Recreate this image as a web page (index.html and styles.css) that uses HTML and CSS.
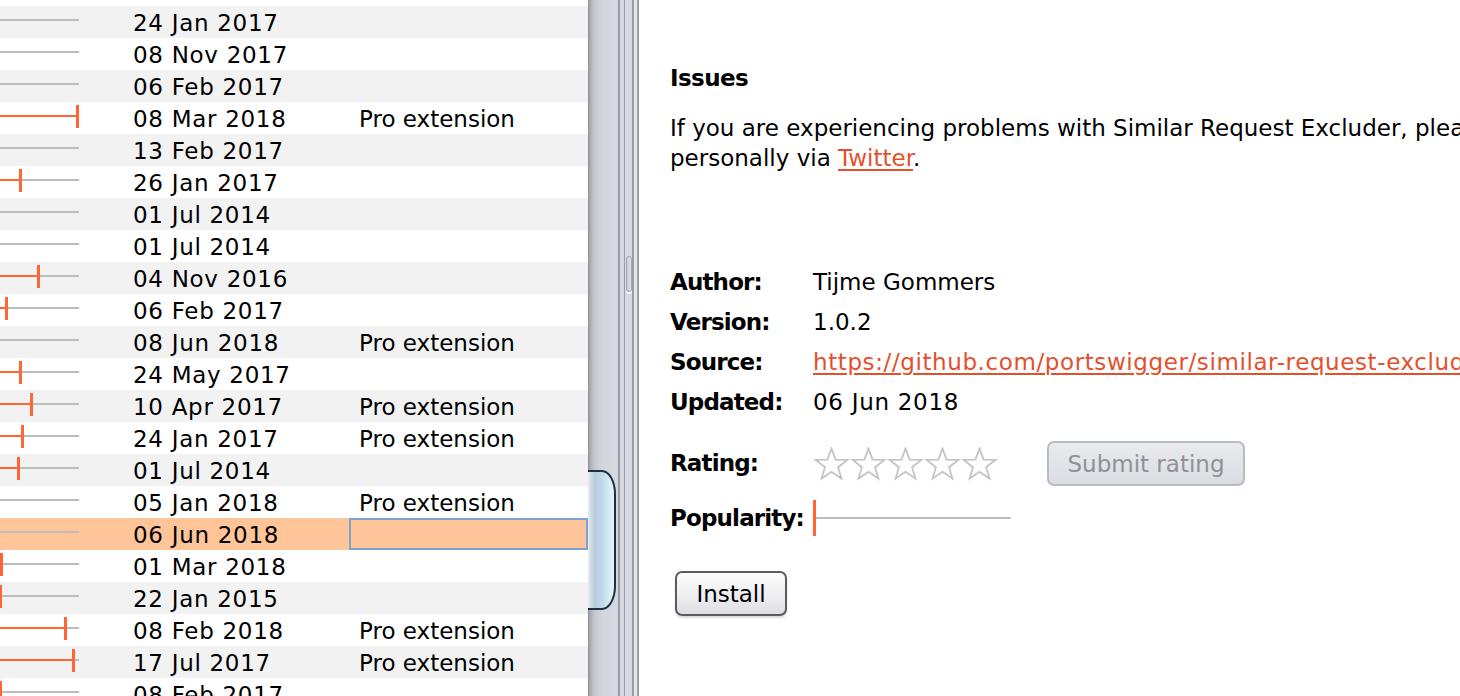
FILE: index.html
```html
<!DOCTYPE html>
<html>
<head>
<meta charset="utf-8">
<link rel="stylesheet" href="styles.css">
</head>
<body>
<div class="app">
  <div class="left">
    <div class="table">
      <div class="row"><div class="c-pop"><div class="bar"></div></div><div class="c-date">08 Feb 2017</div><div class="c-type"></div></div>
      <div class="row alt"><div class="c-pop"><div class="bar"></div></div><div class="c-date">24 Jan 2017</div><div class="c-type"></div></div>
      <div class="row"><div class="c-pop"><div class="bar"></div></div><div class="c-date">08 Nov 2017</div><div class="c-type"></div></div>
      <div class="row alt"><div class="c-pop"><div class="bar"></div></div><div class="c-date">06 Feb 2017</div><div class="c-type"></div></div>
      <div class="row"><div class="c-pop"><div class="bar"><div class="fill" style="width:79px"></div></div></div><div class="c-date">08 Mar 2018</div><div class="c-type">Pro extension</div></div>
      <div class="row alt"><div class="c-pop"><div class="bar"></div></div><div class="c-date">13 Feb 2017</div><div class="c-type"></div></div>
      <div class="row"><div class="c-pop"><div class="bar"><div class="fill" style="width:22px"></div></div></div><div class="c-date">26 Jan 2017</div><div class="c-type"></div></div>
      <div class="row alt"><div class="c-pop"><div class="bar"></div></div><div class="c-date">01 Jul 2014</div><div class="c-type"></div></div>
      <div class="row"><div class="c-pop"><div class="bar"></div></div><div class="c-date">01 Jul 2014</div><div class="c-type"></div></div>
      <div class="row alt"><div class="c-pop"><div class="bar"><div class="fill" style="width:40px"></div></div></div><div class="c-date">04 Nov 2016</div><div class="c-type"></div></div>
      <div class="row"><div class="c-pop"><div class="bar"><div class="fill" style="width:8px"></div></div></div><div class="c-date">06 Feb 2017</div><div class="c-type"></div></div>
      <div class="row alt"><div class="c-pop"><div class="bar"></div></div><div class="c-date">08 Jun 2018</div><div class="c-type">Pro extension</div></div>
      <div class="row"><div class="c-pop"><div class="bar"><div class="fill" style="width:22px"></div></div></div><div class="c-date">24 May 2017</div><div class="c-type"></div></div>
      <div class="row alt"><div class="c-pop"><div class="bar"><div class="fill" style="width:33px"></div></div></div><div class="c-date">10 Apr 2017</div><div class="c-type">Pro extension</div></div>
      <div class="row"><div class="c-pop"><div class="bar"><div class="fill" style="width:24px"></div></div></div><div class="c-date">24 Jan 2017</div><div class="c-type">Pro extension</div></div>
      <div class="row alt"><div class="c-pop"><div class="bar"><div class="fill" style="width:20px"></div></div></div><div class="c-date">01 Jul 2014</div><div class="c-type"></div></div>
      <div class="row"><div class="c-pop"><div class="bar"></div></div><div class="c-date">05 Jan 2018</div><div class="c-type">Pro extension</div></div>
      <div class="row sel"><div class="c-pop"><div class="bar"></div></div><div class="c-date">06 Jun 2018</div><div class="c-type focus"></div></div>
      <div class="row"><div class="c-pop"><div class="bar"><div class="fill" style="width:3px"></div></div></div><div class="c-date">01 Mar 2018</div><div class="c-type"></div></div>
      <div class="row alt"><div class="c-pop"><div class="bar"><div class="fill" style="width:2px"></div></div></div><div class="c-date">22 Jan 2015</div><div class="c-type"></div></div>
      <div class="row"><div class="c-pop"><div class="bar"><div class="fill" style="width:67px"></div></div></div><div class="c-date">08 Feb 2018</div><div class="c-type">Pro extension</div></div>
      <div class="row alt"><div class="c-pop"><div class="bar"><div class="fill" style="width:75px"></div></div></div><div class="c-date">17 Jul 2017</div><div class="c-type">Pro extension</div></div>
      <div class="row"><div class="c-pop"><div class="bar"><div class="fill" style="width:2px"></div></div></div><div class="c-date">08 Feb 2017</div><div class="c-type"></div></div>
    </div>
  </div>
  <div class="vscroll"><div class="thumb"></div></div>
  <div class="split"><div class="grip"></div></div>
  <div class="right">
    <h2 class="heading">Issues</h2>
    <p class="para">If you are experiencing problems with Similar Request Excluder, please contact the author<br>personally via <a class="link" href="#">Twitter</a>.</p>
    <div class="details">
      <div class="lbl">Author:</div><div class="val">Tijme Gommers</div>
      <div class="lbl">Version:</div><div class="val">1.0.2</div>
      <div class="lbl">Source:</div><div class="val"><a class="link url" href="#">https://github.com/portswigger/similar-request-excluder</a></div>
      <div class="lbl">Updated:</div><div class="val date">06 Jun 2018</div>
    </div>
    <div class="rating-row">
      <div class="lbl">Rating:</div>
      <svg class="stars" width="185" height="34" viewBox="0 0 185 34">
        <g fill="#ffffff" stroke="#c4c4c4" stroke-width="1.8" stroke-linejoin="miter">
          <polygon points="18.5,1.5 22.6,12.6 34.4,12.9 25.1,20.2 28.4,31.6 18.5,24.8 8.6,31.6 11.9,20.2 2.6,12.9 14.4,12.6"/>
          <polygon transform="translate(37 0)" points="18.5,1.5 22.6,12.6 34.4,12.9 25.1,20.2 28.4,31.6 18.5,24.8 8.6,31.6 11.9,20.2 2.6,12.9 14.4,12.6"/>
          <polygon transform="translate(74 0)" points="18.5,1.5 22.6,12.6 34.4,12.9 25.1,20.2 28.4,31.6 18.5,24.8 8.6,31.6 11.9,20.2 2.6,12.9 14.4,12.6"/>
          <polygon transform="translate(111 0)" points="18.5,1.5 22.6,12.6 34.4,12.9 25.1,20.2 28.4,31.6 18.5,24.8 8.6,31.6 11.9,20.2 2.6,12.9 14.4,12.6"/>
          <polygon transform="translate(148 0)" points="18.5,1.5 22.6,12.6 34.4,12.9 25.1,20.2 28.4,31.6 18.5,24.8 8.6,31.6 11.9,20.2 2.6,12.9 14.4,12.6"/>
        </g>
      </svg>
      <button class="btn submit" disabled>Submit rating</button>
    </div>
    <div class="pop-row">
      <div class="lbl">Popularity:</div>
      <div class="popbar"></div>
    </div>
    <button class="btn install">Install</button>
  </div>
</div>
</body>
</html>
```

FILE: styles.css
```css
html, body {
  margin: 0;
  padding: 0;
  background: #ffffff;
}
body {
  width: 1460px;
  height: 696px;
  overflow: hidden;
  font-family: "DejaVu Sans", "Liberation Sans", sans-serif;
  font-size: 23px;
  color: #000000;
}
.app {
  display: flex;
  height: 696px;
}
.left {
  width: 588px;
  flex: none;
  overflow: hidden;
  background: #ffffff;
}
.table {
  margin-top: -26px;
}
.row {
  display: grid;
  grid-template-columns: 120px 229px 239px;
  height: 32px;
  background: #ffffff;
}
.row.alt {
  background: #f2f2f2;
}
.row.sel {
  background: #ffc599;
}
.c-pop {
  height: 32px;
}
.bar {
  margin-top: 13px;
  width: 79px;
  height: 2px;
  background: #bdbdbd;
}
.fill {
  position: relative;
  height: 2px;
  background: #ff6633;
}
.fill::after {
  content: "";
  position: absolute;
  right: 0;
  top: -10px;
  width: 3px;
  height: 23px;
  background: #ff6633;
}
.c-date {
  padding-left: 13px;
  line-height: 35px;
  height: 32px;
  white-space: nowrap;
  letter-spacing: 0.7px;
}
.c-type {
  padding-left: 10px;
  line-height: 35px;
  height: 32px;
  white-space: nowrap;
}
.c-type.focus {
  box-sizing: border-box;
  border: 2px solid #7ba2d2;
}
.vscroll {
  width: 30px;
  flex: none;
  background: linear-gradient(to right, #8c8e94 0px, #a9abb1 2px, #c4c6cc 6px, #d2d5dc 14px, #d6d9e1 30px);
  padding-top: 470px;
  box-sizing: border-box;
}
.thumb {
  width: 28px;
  height: 140px;
  box-sizing: border-box;
  border: 2px solid #1d3042;
  border-left: none;
  border-radius: 0 14px 14px 0 / 0 24px 24px 0;
  background: linear-gradient(to right, #e9eef2 0px, #cfd9e2 3px, #b7cbdd 7px, #c3d8e7 14px, #d9eff6 22px, #e4f6f9 26px);
}
.split {
  width: 21px;
  flex: none;
  background: linear-gradient(to right,
    #9a9ca6 0px, #9a9ca6 2px,
    #d6d9e1 2px, #d6d9e1 6px,
    #9a9ca6 6px, #9a9ca6 7px,
    #d6d9e1 7px, #d6d9e1 14px,
    #9a9ca6 14px, #9a9ca6 16px,
    #e6e8ec 16px, #e6e8ec 19px,
    #9a9ca6 19px, #9a9ca6 21px);
  padding-top: 256px;
  box-sizing: border-box;
}
.grip {
  margin-left: 8px;
  width: 6px;
  height: 36px;
  box-sizing: border-box;
  border: 1px solid #a4a6ad;
  border-radius: 3px;
  background: linear-gradient(to right, #c9ccd3, #dfe1e6);
  box-shadow: 0 2px 0 #f4f5f7;
}
.right {
  flex: 1;
  min-width: 0;
  overflow: hidden;
  padding-left: 31px;
  padding-top: 63px;
  white-space: nowrap;
}
.heading {
  margin: 0;
  font-size: 23px;
  font-weight: bold;
  letter-spacing: -0.6px;
  line-height: 30px;
}
.para {
  margin: 20px 0 0 0;
  line-height: 30px;
}
.link {
  color: #e4502b;
  text-decoration: underline;
  text-underline-offset: 3px;
}
.link.url {
  letter-spacing: 0.6px;
}
.details {
  margin-top: 89px;
  display: grid;
  grid-template-columns: 143px auto;
  grid-auto-rows: 40px;
  line-height: 40px;
}
.lbl {
  font-weight: bold;
  letter-spacing: -0.85px;
}
.val.date {
  letter-spacing: 0.7px;
}
.rating-row {
  margin-top: 19px;
  display: grid;
  grid-template-columns: 143px 185px auto;
  align-items: center;
  height: 45px;
  line-height: 45px;
}
.stars {
  display: block;
}
.btn {
  font-family: "DejaVu Sans", "Liberation Sans", sans-serif;
  font-size: 23px;
  height: 45px;
  box-sizing: border-box;
  border-radius: 7px;
  padding: 0;
  margin: 0;
}
.submit {
  margin-left: 49px;
  width: 198px;
  border: 2px solid #b9bcc2;
  background: linear-gradient(to bottom, #e9ebee, #d9dce1);
  color: #8f9197;
}
.pop-row {
  margin-top: 14px;
  display: grid;
  grid-template-columns: 143px 198px;
  align-items: center;
  height: 36px;
  line-height: 36px;
}
.popbar {
  height: 36px;
  background: linear-gradient(to bottom, transparent 17px, #bdbdbd 17px, #bdbdbd 19px, transparent 19px);
  border-left: 3px solid #ff6633;
  box-sizing: border-box;
}
.install {
  display: block;
  margin-top: 35px;
  margin-left: 5px;
  width: 112px;
  border: 2px solid #5a5c62;
  background: linear-gradient(to bottom, #fdfdfd, #ecedf0 60%, #dcdee3);
  color: #000000;
  box-shadow: 0 2px 2px rgba(0,0,0,0.15);
}
```
